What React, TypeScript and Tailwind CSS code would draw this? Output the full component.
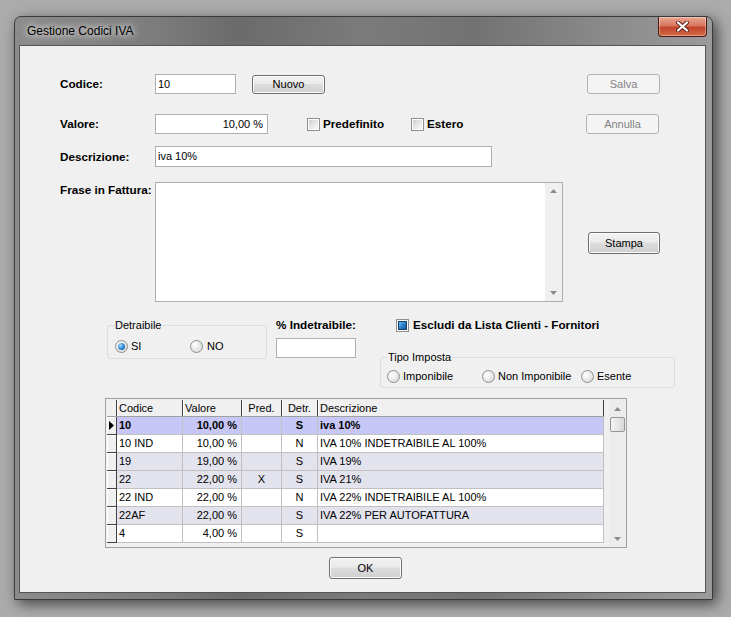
import React from "react";

type Row = {
  code: string;
  value: string;
  pred: string;
  detr: string;
  desc: string;
  tone: "sel" | "white" | "light";
};

const ROWS: Row[] = [
  { code: "10", value: "10,00 %", pred: "", detr: "S", desc: "iva 10%", tone: "sel" },
  { code: "10 IND", value: "10,00 %", pred: "", detr: "N", desc: "IVA 10% INDETRAIBILE AL 100%", tone: "white" },
  { code: "19", value: "19,00 %", pred: "", detr: "S", desc: "IVA 19%", tone: "light" },
  { code: "22", value: "22,00 %", pred: "X", detr: "S", desc: "IVA 21%", tone: "light" },
  { code: "22 IND", value: "22,00 %", pred: "", detr: "N", desc: "IVA 22% INDETRAIBILE AL 100%", tone: "white" },
  { code: "22AF", value: "22,00 %", pred: "", detr: "S", desc: "IVA 22% PER AUTOFATTURA", tone: "light" },
  { code: "4", value: "4,00 %", pred: "", detr: "S", desc: "", tone: "white" },
];

const label = "font-bold text-[11.7px] leading-[14px] text-black";

function Button({
  text,
  className = "",
  disabled = false,
}: {
  text: string;
  className?: string;
  disabled?: boolean;
}) {
  return (
    <div
      className={`flex shrink-0 items-center justify-center rounded-[3px] border text-[11px] ${
        disabled
          ? "border-[#adb2b5] bg-[#f4f4f4] text-[#838383]"
          : "border-[#707070] bg-[linear-gradient(#f2f2f2,#ebebeb_45%,#dddddd_50%,#cfcfcf)] text-black shadow-[inset_0_0_0_1px_#fbfbfb]"
      } ${className}`}
    >
      {text}
    </div>
  );
}

function Check({ checked = false }: { checked?: boolean }) {
  return (
    <span className="flex h-[13px] w-[13px] shrink-0 border border-[#8e8f8f] bg-white p-[1px]">
      <span
        className={`h-full w-full ${
          checked
            ? "border border-[#1b3f66] bg-[linear-gradient(135deg,#6cc0f5,#2b7fc8_55%,#1a5692)]"
            : "bg-[linear-gradient(135deg,#cfcfcf,#eeeeee_70%,#f7f7f7)]"
        }`}
      />
    </span>
  );
}

function Radio({ checked = false }: { checked?: boolean }) {
  return (
    <span className="flex h-[13px] w-[13px] shrink-0 items-center justify-center rounded-full border border-[#8e8f8f] bg-[radial-gradient(circle_at_35%_35%,#ffffff,#e4e4e4_60%,#cfcfcf)]">
      {checked && (
        <span className="h-[7px] w-[7px] rounded-full bg-[radial-gradient(circle_at_35%_35%,#a8dcff,#2a86d0_55%,#0b4a8a)]" />
      )}
    </span>
  );
}

function Arrow({ up }: { up: boolean }) {
  return (
    <svg width="7" height="4" viewBox="0 0 7 4">
      <polygon points={up ? "0,4 7,4 3.5,0" : "0,0 7,0 3.5,4"} fill="#8a8a8a" />
    </svg>
  );
}

function Grid() {
  const cell = "flex h-full items-center border-r border-[#c0c0c0] px-[2px] overflow-hidden whitespace-nowrap";
  const head = "flex h-full items-center border-r border-[#404040] shadow-[inset_1px_0_0_#ffffff] px-[2px]";
  return (
    <div className="ml-[85px] mt-[10px] flex h-[150px] w-[522px] border border-[#a0a0a0] bg-[#f0f0f0] pl-[1px] pt-[1px] text-[11px]">
      <div className="w-[497px]">
        <div className="flex h-[17px] border-b border-[#a0a0a0] bg-[#f0f0f0]">
          <div className="h-full w-[10px] border-r border-[#404040]" />
          <div className={`${head} w-[66px]`}>Codice</div>
          <div className={`${head} w-[59px]`}>Valore</div>
          <div className={`${head} w-[40px] justify-center`}>Pred.</div>
          <div className={`${head} w-[36px] justify-center`}>Detr.</div>
          <div className={`${head} w-[286px]`}>Descrizione</div>
        </div>
        {ROWS.map((r, i) => (
          <div
            key={i}
            className={`flex h-[18px] ${
              r.tone === "sel"
                ? "bg-[#c6c6f7] font-bold"
                : r.tone === "light"
                ? "bg-[#e3e3ee]"
                : "bg-white"
            }`}
          >
            <div className="flex h-full w-[10px] items-center justify-center border-b border-r border-[#404040] bg-[#f0f0f0] shadow-[inset_1px_1px_0_#ffffff]">
              {r.tone === "sel" && (
                <svg width="5" height="9" viewBox="0 0 5 9">
                  <polygon points="0,0 5,4.5 0,9" fill="#000" />
                </svg>
              )}
            </div>
            <div className="flex w-[487px] border-b border-[#c0c0c0]">
              <div className={`${cell} w-[66px]`}>{r.code}</div>
              <div className={`${cell} w-[59px] justify-end pr-[4px]`}>{r.value}</div>
              <div className={`${cell} w-[40px] justify-center`}>{r.pred}</div>
              <div className={`${cell} w-[36px] justify-center`}>{r.detr}</div>
              <div className={`${cell} w-[286px]`}>{r.desc}</div>
            </div>
          </div>
        ))}
      </div>
      <div className="w-[5px]" />
      <div className="flex h-[147px] w-[17px] flex-col items-center bg-[#ececec]">
        <div className="flex h-[17px] items-center justify-center">
          <Arrow up />
        </div>
        <div className="h-[15px] w-[15px] rounded-[2px] border border-[#959595] bg-[linear-gradient(90deg,#f4f4f4,#e6e6e6_50%,#d8d8d8)]" />
        <div className="flex-1" />
        <div className="flex h-[17px] items-center justify-center">
          <Arrow up={false} />
        </div>
      </div>
    </div>
  );
}

export default function App() {
  return (
    <div className="h-[617px] w-[731px] overflow-hidden bg-[#ababab] pl-[14px] pt-[16px] font-['Liberation_Sans',Arial,sans-serif]">
      <div className="flex h-[584px] w-[699px] flex-col rounded-t-[7px] border border-[#3a3a3a] bg-[linear-gradient(90deg,#8c8c8c_0%,#7c7c7c_20%,#6b6b6b_32%,#7b7b7b_50%,#727272_66%,#8c8c8c_86%,#9b9b9b_100%)] pb-[6px] pl-[4px] pr-[2px] shadow-[4px_4px_14px_rgba(0,0,0,0.6)]">
        {/* title bar */}
        <div className="flex h-[28px] items-start justify-between">
          <div className="pl-[8px] pt-[7px] text-[12px] leading-[14px] text-black [text-shadow:0_0_6px_#ffffff,0_0_10px_#dddddd]">
            Gestione Codici IVA
          </div>
          <div className="mr-[3px] flex h-[20px] w-[49px] items-center justify-center rounded-b-[4px] border border-t-0 border-[#4a1a12] bg-[linear-gradient(#e9a793,#d8765d_45%,#c2442a_55%,#d46b48)] shadow-[inset_0_0_0_1px_rgba(255,255,255,0.35)]">
            <svg width="13" height="11" viewBox="0 0 13 11">
              <path d="M2 1.5 L11 9.5 M11 1.5 L2 9.5" stroke="#5a2218" strokeWidth="4" strokeLinecap="round" />
              <path d="M2 1.5 L11 9.5 M11 1.5 L2 9.5" stroke="#ffffff" strokeWidth="2.2" strokeLinecap="round" />
            </svg>
          </div>
        </div>

        {/* client area */}
        <div className="h-[548px] w-[687px] border border-[#555555] bg-[#f0f0f0] text-[11px] text-black">
          {/* Codice */}
          <div className="mt-[28px] flex h-[20px] items-center">
            <div className={`w-[135px] pl-[40px] ${label}`}>Codice:</div>
            <div className="flex h-[20px] w-[81px] items-center border border-[#abadb3] bg-white pl-[2px]">10</div>
            <Button text="Nuovo" className="ml-[16px] h-[19px] w-[73px]" />
            <Button text="Salva" disabled className="ml-[262px] h-[20px] w-[73px]" />
          </div>

          {/* Valore */}
          <div className="mt-[20px] flex h-[20px] items-center">
            <div className={`w-[135px] pl-[40px] ${label}`}>Valore:</div>
            <div className="flex h-[20px] w-[113px] items-center justify-end border border-[#abadb3] bg-white pr-[4px]">
              10,00 %
            </div>
            <div className="ml-[39px] flex w-[104px] items-center gap-[3px]">
              <Check />
              <span className={label}>Predefinito</span>
            </div>
            <div className="flex w-[175px] items-center gap-[3px]">
              <Check />
              <span className={label}>Estero</span>
            </div>
            <Button text="Annulla" disabled className="h-[20px] w-[73px]" />
          </div>

          {/* Descrizione */}
          <div className="mt-[12px] flex h-[21px] items-center">
            <div className={`w-[135px] pl-[40px] ${label}`}>Descrizione:</div>
            <div className="flex h-[21px] w-[337px] items-center border border-[#abadb3] bg-white pl-[2px]">iva 10%</div>
          </div>

          {/* Frase in fattura */}
          <div className="mt-[15px] flex h-[120px] items-start">
            <div className={`w-[135px] pl-[40px] pt-[1px] ${label}`}>Frase in Fattura:</div>
            <div className="flex h-[120px] w-[408px] border border-[#abadb3] bg-white">
              <div className="flex-1" />
              <div className="flex w-[17px] flex-col items-center justify-between bg-[#f0f0f0] py-[6px]">
                <Arrow up />
                <Arrow up={false} />
              </div>
            </div>
            <Button text="Stampa" className="ml-[25px] mt-[50px] h-[22px] w-[72px]" />
          </div>

          {/* Detraibile / Indetraibile / Escludi / Tipo imposta */}
          <div className="mt-[16px] flex h-[70px] items-start">
            <fieldset className="ml-[87px] mt-[1px] h-[40px] w-[160px] rounded-[3px] border border-[#d5dfe5] px-[6px]">
              <legend className="px-[1px] text-[11px] leading-[13px]">Detraibile</legend>
              <div className="ml-[1px] mt-[6px] flex items-center">
                <Radio checked />
                <span className="ml-[3px] w-[59px]">SI</span>
                <Radio />
                <span className="ml-[4px]">NO</span>
              </div>
            </fieldset>
            <div className="ml-[9px] flex w-[80px] flex-col">
              <div className={`${label} whitespace-nowrap`}>% Indetraibile:</div>
              <div className="mt-[6px] h-[20px] w-[80px] border border-[#abadb3] bg-white" />
            </div>
            <div className="ml-[24px] flex flex-col">
              <div className="ml-[16px] flex h-[14px] items-center gap-[4px]">
                <Check checked />
                <span className={`${label} whitespace-nowrap`}>Escludi da Lista Clienti - Fornitori</span>
              </div>
              <fieldset className="mt-[19px] h-[37px] w-[295px] rounded-[3px] border border-[#d5dfe5] px-[6px]">
                <legend className="px-[1px] text-[11px] leading-[13px]">Tipo Imposta</legend>
                <div className="mt-[4px] flex items-center">
                  <Radio />
                  <span className="ml-[3px] w-[79px]">Imponibile</span>
                  <Radio />
                  <span className="ml-[3px] w-[83px]">Non Imponibile</span>
                  <Radio />
                  <span className="ml-[3px]">Esente</span>
                </div>
              </fieldset>
            </div>
          </div>

          <Grid />

          <Button text="OK" className="ml-[309px] mt-[9px] h-[22px] w-[73px]" />
        </div>
      </div>
    </div>
  );
}
